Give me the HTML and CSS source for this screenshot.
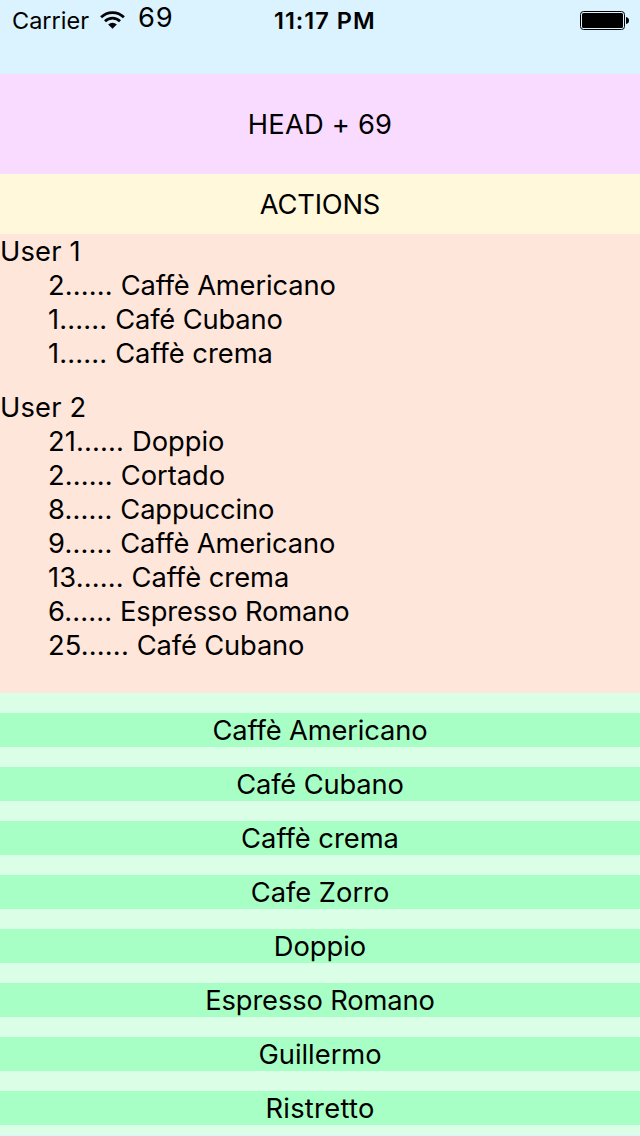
FILE: index.html
```html
<!DOCTYPE html>
<html lang="en">
<head>
<meta charset="utf-8">
<title>Coffee orders</title>
<link rel="stylesheet" href="styles.css">
</head>
<body>
<div class="status">
  <span class="carrier">Carrier</span>
  <svg class="wifi" width="26" height="19" viewBox="0 0 26 19">
    <g fill="none" stroke="#000" stroke-width="2.7">
      <path d="M2.1 7.3A16 16 0 0 1 24.900 7.300"/>
      <path d="M6 11.200A10.600 10.600 0 0 1 21 11.200"/>
    </g>
    <path d="M9.200 14.600A6.200 6.200 0 0 1 17.800 14.600L13.500 18.800Z"/>
  </svg>
  <span class="count">69</span>
  <span class="time">11:17 PM</span>
  <svg class="battery" width="50" height="20" viewBox="0 0 50 20">
    <rect x=".5" y=".5" width="44" height="18" rx="3" fill="none" stroke="#000"/>
    <rect x="2" y="2" width="41" height="15" rx="1.5"/>
    <path d="M46 6Q49 6.500 49 9.500T46 13Z"/>
  </svg>
</div>
<header class="head">HEAD + 69</header>
<div class="actions">ACTIONS</div>
<main class="users">
  <section class="user">
    <div class="name">User 1</div>
    <ul class="orders">
      <li><span class="qty">2...... </span><span class="tight">Caffè Americano</span></li>
      <li><span class="qty">1...... </span><span class="tight">Café Cubano</span></li>
      <li><span class="qty">1...... </span>Caffè crema</li>
    </ul>
  </section>
  <section class="user">
    <div class="name">User 2</div>
    <ul class="orders">
      <li><span class="qty">21...... </span>Doppio</li>
      <li><span class="qty">2...... </span>Cortado</li>
      <li><span class="qty">8...... </span><span class="tight">Cappuccino</span></li>
      <li><span class="qty">9...... </span><span class="tight">Caffè Americano</span></li>
      <li><span class="qty">13...... </span>Caffè crema</li>
      <li><span class="qty">6...... </span><span class="tight">Espresso Romano</span></li>
      <li><span class="qty">25...... </span><span class="tight">Café Cubano</span></li>
    </ul>
  </section>
</main>
<ul class="menu">
  <li class="tight">Caffè Americano</li>
  <li class="tight">Café Cubano</li>
  <li>Caffè crema</li>
  <li>Cafe Zorro</li>
  <li>Doppio</li>
  <li class="tight">Espresso Romano</li>
  <li>Guillermo</li>
  <li class="loose">Ristretto</li>
</ul>
<footer class="footer"></footer>
</body>
</html>
```
FILE: styles.css
```css
* { box-sizing: border-box; margin: 0; padding: 0; }
body {
  display: flex;
  flex-direction: column;
  width: 640px;
  height: 1136px;
  overflow: hidden;
  font: 27.3px/36px Inter, "Liberation Sans", sans-serif;
  color: #000;
}
ul { list-style: none; }
.status {
  display: grid;
  grid-template-columns: 99px 39px 136px 306px 60px;
  height: 74px;
  background: #dbf3ff;
  white-space: nowrap;
}
.carrier { padding-left: 12px; font-size: 23.5px; line-height: 42px; }
.wifi { margin-top: 10px; }
.count { letter-spacing: .8px; }
.time { font-size: 23.5px; font-weight: 600; line-height: 42px; letter-spacing: 1px; }
.battery { margin-top: 11px; }
.head {
  height: 100px;
  padding-top: 33px;
  background: #f9dbff;
  text-align: center;
  letter-spacing: .2px;
}
.actions {
  height: 60px;
  padding-top: 13px;
  background: #fff8db;
  text-align: center;
  letter-spacing: -.2px;
}
.users {
  display: flex;
  flex-direction: column;
  gap: 20px;
  height: 459px;
  background: #ffe6db;
}
.name { height: 34px; letter-spacing: .2px; }
.orders { padding-left: 48px; }
.orders li { height: 34px; }
.qty { letter-spacing: .15px; }
.tight { letter-spacing: -.13px; }
.loose { letter-spacing: .3px; }
.menu {
  display: flex;
  flex: 1;
  flex-direction: column;
  gap: 20px;
  padding-top: 20px;
  background: #dbffe6;
  text-align: center;
}
.menu li { height: 34px; background: #a8ffc5; }
.footer { height: 1px; background: #dbf3ff; }
```
